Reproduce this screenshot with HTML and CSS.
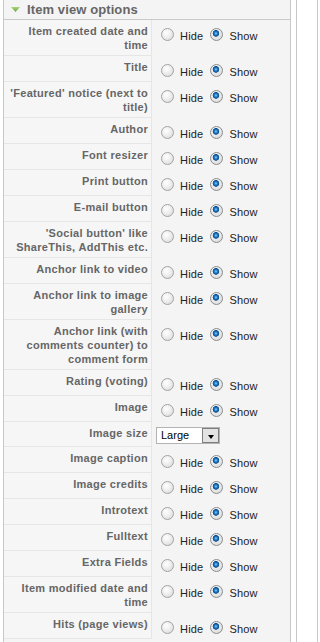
FILE: index.html
```html
<!DOCTYPE html>
<html lang="en">
<head>
    <meta charset="UTF-8">
    <meta name="viewport" content="width=device-width, initial-scale=1.0">
    <title>Item view options</title>
    <link rel="stylesheet" href="styles.css">
</head>
<body>

<div class="page">
    <!-- Item view options pane -->
    <div class="pane">
        <h3 class="pane-title">
            <svg class="toggler" width="9" height="5" viewBox="0 0 9 5">
                <defs>
                    <linearGradient id="arrowFill" x1="0" y1="0" x2="0" y2="1">
                        <stop offset="0" stop-color="#a9d67c"/>
                        <stop offset="1" stop-color="#64a436"/>
                    </linearGradient>
                </defs>
                <polygon points="0,0 9,0 4.5,5" fill="url(#arrowFill)"/>
            </svg>
            Item view options
        </h3>

        <div class="options">
            <div class="row">
                <div class="key">Item created date and time</div>
                <div class="value">
                    <label class="opt"><input type="radio" name="itemDateCreated" value="0">Hide</label>
                    <label class="opt"><input type="radio" name="itemDateCreated" value="1" checked>Show</label>
                </div>
            </div>
            <div class="row">
                <div class="key">Title</div>
                <div class="value">
                    <label class="opt"><input type="radio" name="itemTitle" value="0">Hide</label>
                    <label class="opt"><input type="radio" name="itemTitle" value="1" checked>Show</label>
                </div>
            </div>
            <div class="row">
                <div class="key">'Featured' notice (next to title)</div>
                <div class="value">
                    <label class="opt"><input type="radio" name="itemFeaturedNotice" value="0">Hide</label>
                    <label class="opt"><input type="radio" name="itemFeaturedNotice" value="1" checked>Show</label>
                </div>
            </div>
            <div class="row">
                <div class="key">Author</div>
                <div class="value">
                    <label class="opt"><input type="radio" name="itemAuthor" value="0">Hide</label>
                    <label class="opt"><input type="radio" name="itemAuthor" value="1" checked>Show</label>
                </div>
            </div>
            <div class="row">
                <div class="key">Font resizer</div>
                <div class="value">
                    <label class="opt"><input type="radio" name="itemFontResizer" value="0">Hide</label>
                    <label class="opt"><input type="radio" name="itemFontResizer" value="1" checked>Show</label>
                </div>
            </div>
            <div class="row">
                <div class="key">Print button</div>
                <div class="value">
                    <label class="opt"><input type="radio" name="itemPrintButton" value="0">Hide</label>
                    <label class="opt"><input type="radio" name="itemPrintButton" value="1" checked>Show</label>
                </div>
            </div>
            <div class="row">
                <div class="key">E-mail button</div>
                <div class="value">
                    <label class="opt"><input type="radio" name="itemEmailButton" value="0">Hide</label>
                    <label class="opt"><input type="radio" name="itemEmailButton" value="1" checked>Show</label>
                </div>
            </div>
            <div class="row">
                <div class="key">'Social button' like ShareThis, AddThis etc.</div>
                <div class="value">
                    <label class="opt"><input type="radio" name="itemSocialButton" value="0">Hide</label>
                    <label class="opt"><input type="radio" name="itemSocialButton" value="1" checked>Show</label>
                </div>
            </div>
            <div class="row">
                <div class="key">Anchor link to video</div>
                <div class="value">
                    <label class="opt"><input type="radio" name="itemVideoAnchor" value="0">Hide</label>
                    <label class="opt"><input type="radio" name="itemVideoAnchor" value="1" checked>Show</label>
                </div>
            </div>
            <div class="row">
                <div class="key">Anchor link to image gallery</div>
                <div class="value">
                    <label class="opt"><input type="radio" name="itemImageGalleryAnchor" value="0">Hide</label>
                    <label class="opt"><input type="radio" name="itemImageGalleryAnchor" value="1" checked>Show</label>
                </div>
            </div>
            <div class="row">
                <div class="key">Anchor link (with comments counter) to comment form</div>
                <div class="value">
                    <label class="opt"><input type="radio" name="itemCommentsAnchor" value="0">Hide</label>
                    <label class="opt"><input type="radio" name="itemCommentsAnchor" value="1" checked>Show</label>
                </div>
            </div>
            <div class="row">
                <div class="key">Rating (voting)</div>
                <div class="value">
                    <label class="opt"><input type="radio" name="itemRating" value="0">Hide</label>
                    <label class="opt"><input type="radio" name="itemRating" value="1" checked>Show</label>
                </div>
            </div>
            <div class="row">
                <div class="key">Image</div>
                <div class="value">
                    <label class="opt"><input type="radio" name="itemImage" value="0">Hide</label>
                    <label class="opt"><input type="radio" name="itemImage" value="1" checked>Show</label>
                </div>
            </div>
            <div class="row">
                <div class="key">Image size</div>
                <div class="value value-select">
                    <div class="select">
                        <span class="select-text">Large</span>
                        <span class="select-btn"><span class="select-arrow"></span></span>
                    </div>
                </div>
            </div>
            <div class="row">
                <div class="key">Image caption</div>
                <div class="value">
                    <label class="opt"><input type="radio" name="itemImageMainCaption" value="0">Hide</label>
                    <label class="opt"><input type="radio" name="itemImageMainCaption" value="1" checked>Show</label>
                </div>
            </div>
            <div class="row">
                <div class="key">Image credits</div>
                <div class="value">
                    <label class="opt"><input type="radio" name="itemImageMainCredits" value="0">Hide</label>
                    <label class="opt"><input type="radio" name="itemImageMainCredits" value="1" checked>Show</label>
                </div>
            </div>
            <div class="row">
                <div class="key">Introtext</div>
                <div class="value">
                    <label class="opt"><input type="radio" name="itemIntroText" value="0">Hide</label>
                    <label class="opt"><input type="radio" name="itemIntroText" value="1" checked>Show</label>
                </div>
            </div>
            <div class="row">
                <div class="key">Fulltext</div>
                <div class="value">
                    <label class="opt"><input type="radio" name="itemFullText" value="0">Hide</label>
                    <label class="opt"><input type="radio" name="itemFullText" value="1" checked>Show</label>
                </div>
            </div>
            <div class="row">
                <div class="key">Extra Fields</div>
                <div class="value">
                    <label class="opt"><input type="radio" name="itemExtraFields" value="0">Hide</label>
                    <label class="opt"><input type="radio" name="itemExtraFields" value="1" checked>Show</label>
                </div>
            </div>
            <div class="row">
                <div class="key">Item modified date and time</div>
                <div class="value">
                    <label class="opt"><input type="radio" name="itemDateModified" value="0">Hide</label>
                    <label class="opt"><input type="radio" name="itemDateModified" value="1" checked>Show</label>
                </div>
            </div>
            <div class="row">
                <div class="key">Hits (page views)</div>
                <div class="value">
                    <label class="opt"><input type="radio" name="itemHits" value="0">Hide</label>
                    <label class="opt"><input type="radio" name="itemHits" value="1" checked>Show</label>
                </div>
            </div>
        </div>
    </div>

    <!-- next column, cut off at the edge -->
    <div class="side"></div>
</div>

</body>
</html>
```

FILE: styles.css
```css
body {
    margin: 0;
    padding: 0;
    background-color: #fff;
    font-family: "Liberation Sans", Arial, sans-serif;
    font-size: 11px;
    color: #333;
}

.page {
    display: flex;
    align-items: stretch;
}

/* Pane */
.pane {
    width: 288px;
    box-sizing: border-box;
    margin: -1px 0 0 3px;
    border: 1px solid #c9c9c9;
    background-color: #f4f4f4;
}

.pane-title {
    display: flex;
    align-items: center;
    margin: 0;
    padding: 0 0 0 7px;
    height: 19px;
    line-height: 19px;
    font-size: 13px;
    font-weight: bold;
    letter-spacing: 0.1px;
    color: #666;
    background-color: #f4f4f4;
    border-bottom: 1px solid #c9c9c9;
}

.toggler {
    margin: 0 7px 0 0;
    flex-shrink: 0;
}

.side {
    width: 22px;
    box-sizing: border-box;
    margin-left: 5px;
    border-left: 1px solid #c9c9c9;
    border-right: 1px solid #c9c9c9;
}

/* Option rows */
.options {
    padding-bottom: 6px;
}

.row {
    display: grid;
    grid-template-columns: 148px 1fr;
}

.key {
    box-sizing: border-box;
    padding: 4px 3px 3px 4px;
    line-height: 14px;
    text-align: right;
    font-weight: bold;
    letter-spacing: 0.3px;
    color: #666;
    background-color: #f6f6f6;
    border-bottom: 1px solid #e6e6e6;
    border-right: 1px solid #e6e6e6;
}

.value {
    display: flex;
    align-items: flex-start;
    padding: 8px 0 3px 9px;
}

.value-select {
    padding: 5px 0 3px 4px;
}

.opt {
    display: flex;
    align-items: center;
    line-height: 14px;
    margin-right: 7px;
    letter-spacing: 0.2px;
    color: #222;
}

/* Radio buttons */
.opt input {
    -webkit-appearance: none;
    appearance: none;
    width: 13px;
    height: 13px;
    margin: 0 6px 2px 0;
    border: 1px solid #a3a3a3;
    border-radius: 50%;
    box-sizing: border-box;
    background: radial-gradient(circle at 40% 35%, #ffffff 0, #f2f2f2 35%, #d6d6d6 100%);
}

.opt input:checked {
    border-color: #8d8d8d;
    background:
        radial-gradient(circle at 45% 40%, #8fd0ff 0, #1f78c2 1.6px, #0d4f8f 3px, rgba(13, 79, 143, 0) 3.6px),
        radial-gradient(circle at 40% 35%, #ffffff 0, #eeeeee 40%, #cfcfcf 100%);
}

/* Dropdown */
.select {
    display: flex;
    width: 64px;
    height: 17px;
    box-sizing: border-box;
    border: 1px solid #b3b3b3;
    background-color: #fff;
}

.select-text {
    flex: 1;
    padding-left: 4px;
    line-height: 15px;
    color: #000;
}

.select-btn {
    display: flex;
    justify-content: center;
    align-items: center;
    width: 17px;
    box-sizing: border-box;
    border: 1px solid #7d7d7d;
    background-color: #e3e3e3;
    padding-top: 2px;
}

.select-arrow {
    width: 0;
    height: 0;
    border-top: 4px solid #000;
    border-left: 3px solid transparent;
    border-right: 3px solid transparent;
}
```
